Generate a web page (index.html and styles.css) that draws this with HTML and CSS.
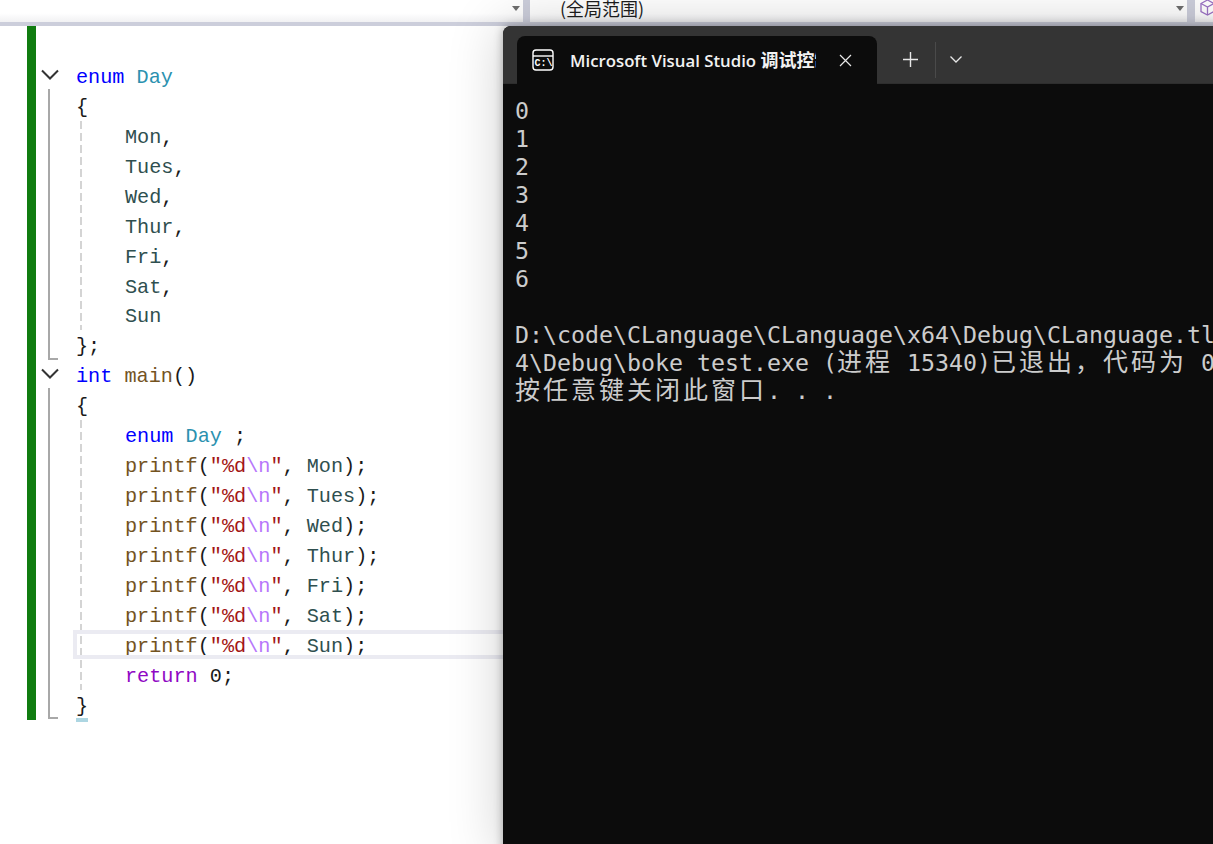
FILE: index.html
```html
<!DOCTYPE html>
<html lang="en">
<head>
    <meta charset="UTF-8">
    <title>boke test</title>
    <link rel="stylesheet" href="styles.css">
</head>
<body>
    <header class="topbar">
        <div class="combo combo_left"><span class="arrow"></span></div>
        <div class="combo combo_main">
            <span class="scope">(全局范围)</span>
            <span class="arrow"></span>
        </div>
        <div class="combo combo_right">
            <svg class="cube" width="16" height="18" viewBox="0 0 16 18" fill="none" stroke="#9b72c4" stroke-width="1.3">
                <path d="M1 4.5 L7.5 1 L14 4.5 V12.5 L7.5 16 L1 12.5 Z"/>
                <path d="M1 4.5 L7.5 8 L14 4.5 M7.5 8 V16"/>
            </svg>
        </div>
    </header>

    <div class="editor">
        <div class="changebar"></div>
        <div class="gutter">
            <div class="fold_head">
                <svg width="18" height="11" viewBox="0 0 18 11" fill="none" stroke="#333" stroke-width="2"><path d="M1 1.5 L9 9.5 L17 1.5"/></svg>
            </div>
            <div class="fold_body fold_enum"></div>
            <div class="fold_head">
                <svg width="18" height="11" viewBox="0 0 18 11" fill="none" stroke="#333" stroke-width="2"><path d="M1 1.5 L9 9.5 L17 1.5"/></svg>
            </div>
            <div class="fold_body fold_main"></div>
        </div>
        <div class="code">
            <div class="line"></div>
            <div class="line"><span class="kw">enum</span> <span class="type">Day</span></div>
            <div class="line">{</div>
            <div class="indent">
                <div class="line"><span class="const">Mon</span>,</div>
                <div class="line"><span class="const">Tues</span>,</div>
                <div class="line"><span class="const">Wed</span>,</div>
                <div class="line"><span class="const">Thur</span>,</div>
                <div class="line"><span class="const">Fri</span>,</div>
                <div class="line"><span class="const">Sat</span>,</div>
                <div class="line"><span class="const">Sun</span></div>
            </div>
            <div class="line">};</div>
            <div class="line"><span class="kw">int</span> <span class="fn">main</span>()</div>
            <div class="line">{</div>
            <div class="indent">
                <div class="line"><span class="kw">enum</span> <span class="type">Day</span> ;</div>
                <div class="line"><span class="fn">printf</span>(<span class="str">"%d</span><span class="esc">\n</span><span class="str">"</span>, <span class="const">Mon</span>);</div>
                <div class="line"><span class="fn">printf</span>(<span class="str">"%d</span><span class="esc">\n</span><span class="str">"</span>, <span class="const">Tues</span>);</div>
                <div class="line"><span class="fn">printf</span>(<span class="str">"%d</span><span class="esc">\n</span><span class="str">"</span>, <span class="const">Wed</span>);</div>
                <div class="line"><span class="fn">printf</span>(<span class="str">"%d</span><span class="esc">\n</span><span class="str">"</span>, <span class="const">Thur</span>);</div>
                <div class="line"><span class="fn">printf</span>(<span class="str">"%d</span><span class="esc">\n</span><span class="str">"</span>, <span class="const">Fri</span>);</div>
                <div class="line"><span class="fn">printf</span>(<span class="str">"%d</span><span class="esc">\n</span><span class="str">"</span>, <span class="const">Sat</span>);</div>
                <div class="line current"><span class="fn">printf</span>(<span class="str">"%d</span><span class="esc">\n</span><span class="str">"</span>, <span class="const">Sun</span>);</div>
                <div class="line"><span class="ret">return</span> 0;</div>
            </div>
            <div class="line">}</div>
            <div class="brace_mark"></div>
        </div>
    </div>

    <section class="console">
        <div class="tabbar">
            <div class="tab">
                <svg class="tab_icon" width="22" height="22" viewBox="0 0 22 22" fill="none" stroke="#fff" stroke-width="1.4">
                    <rect x="1" y="1" width="20" height="20" rx="3"/>
                    <path d="M1 7 H21"/>
                    <text x="2.5" y="17" class="tab_icon_text">C:\</text>
                </svg>
                <span class="tab_title">Microsoft Visual Studio <span class="tab_cjk">调试控制台</span></span>
                <svg class="tab_close" width="13" height="13" viewBox="0 0 13 13" stroke="#e8e8e8" stroke-width="1.2"><path d="M1 1 L12 12 M12 1 L1 12"/></svg>
            </div>
            <svg class="tab_plus" width="15" height="15" viewBox="0 0 15 15" stroke="#e8e8e8" stroke-width="1.4"><path d="M7.5 0 V15 M0 7.5 H15"/></svg>
            <div class="tab_sep"></div>
            <svg class="tab_more" width="12" height="7" viewBox="0 0 12 7" fill="none" stroke="#e8e8e8" stroke-width="1.3"><path d="M0.5 0.5 L6 6 L11.5 0.5"/></svg>
        </div>
        <div class="output">
            <div class="row">0</div>
            <div class="row">1</div>
            <div class="row">2</div>
            <div class="row">3</div>
            <div class="row">4</div>
            <div class="row">5</div>
            <div class="row">6</div>
            <div class="row"></div>
            <div class="row">D:\code\CLanguage\CLanguage\x64\Debug\CLanguage.tlog</div>
            <div class="row">4\Debug\boke test.exe (<span class="cjk">进程</span> 15340)<span class="cjk">已退出，代码为</span> 0</div>
            <div class="row"><span class="cjk">按任意键关闭此窗口</span>. . .</div>
        </div>
    </section>
</body>
</html>
```
FILE: styles.css
```css
* {
    box-sizing: border-box;
}

html, body {
    margin: 0;
    height: 100%;
    overflow: hidden;
    background-color: #fff;
}

/* top combo boxes */
.topbar {
    display: flex;
    height: 26px;
    border-bottom: 4px solid #cccedb;
    background-color: #cccedb;
}
.combo {
    position: relative;
    height: 22px;
    overflow: hidden;
    background: linear-gradient(#fff 60%, #f1f1f3);
}
.combo_left {
    width: 523px;
}
.combo_main {
    width: 657px;
    margin-left: 7px;
    padding-left: 30px;
}
.combo_right {
    flex: 1;
    margin-left: 8px;
    padding-left: 5px;
}
.arrow {
    position: absolute;
    top: 6px;
    right: 3px;
    border-left: 4px solid transparent;
    border-right: 4px solid transparent;
    border-top: 5px solid #6e6e6e;
}
.scope {
    font-family: "Noto Sans CJK SC", sans-serif;
    font-size: 18px;
    line-height: 17px;
    display: block;
    color: #1e1e1e;
}
.cube {
    display: block;
    margin-top: -1px;
}

/* editor */
.editor {
    display: flex;
    align-items: flex-start;
    margin-left: 27px;
}
.changebar {
    width: 9px;
    height: 694px;
    background-color: #107c10;
}
.gutter {
    width: 40px;
    padding-top: 35px;
    padding-left: 5px;
}
.fold_head {
    height: 28px;
    display: flex;
    align-items: center;
    padding-bottom: 2px;
}
.fold_body {
    width: 10px;
    margin-left: 7px;
    border-left: 2px solid #a8a8a8;
    border-bottom: 2px solid #a8a8a8;
}
.fold_enum {
    height: 271px;
}
.fold_main {
    height: 331px;
}

.code {
    font-family: "Liberation Mono", monospace;
    font-size: 20.2px;
    color: #1a1a1a;
    padding-top: 5px;
}
.line {
    position: relative;
    height: 29.95px;
    line-height: 33.95px;
    white-space: pre;
}
.indent {
    margin-left: 4px;
    padding-left: 45px;
    background-image: repeating-linear-gradient(#d4d4d4 0 8px, transparent 8px 12px);
    background-size: 2px 100%;
    background-repeat: no-repeat;
}
.current::before {
    content: "";
    position: absolute;
    top: 0;
    left: -52px;
    width: 460px;
    height: 29px;
    box-sizing: border-box;
    border: 4px solid #ebebf2;
    border-right: 0;
}
.brace_mark {
    width: 12px;
    height: 4px;
    margin-top: -2px;
    background-color: #add6e2;
}

.kw { color: #0000ff; }
.type { color: #2b91af; }
.const { color: #2f4f4f; }
.fn { color: #74531f; }
.str { color: #a31515; }
.esc { color: #b776fb; }
.ret { color: #8f08c4; }

/* terminal window */
.console {
    position: absolute;
    top: 26px;
    left: 503px;
    width: 730px;
    height: 830px;
    border-top-left-radius: 8px;
    background-color: #0c0c0c;
    box-shadow: 0 0 10px rgba(0, 0, 0, 0.3), 0 0 55px rgba(0, 0, 0, 0.2);
}
.tabbar {
    display: flex;
    align-items: center;
    height: 58px;
    padding-top: 10px;
    padding-left: 14px;
    border-top-left-radius: 8px;
    background-color: #343434;
    border-bottom: 1px solid #2e2e2e;
}
.tab {
    display: flex;
    align-items: center;
    align-self: flex-end;
    flex-shrink: 0;
    width: 360px;
    height: 48px;
    margin-bottom: -1px;
    padding-left: 15px;
    border-radius: 8px 8px 0 0;
    background-color: #0c0c0c;
}
.tab_icon_text {
    font-family: "Liberation Mono", monospace;
    font-size: 10px;
    font-weight: bold;
    fill: #fff;
    stroke: none;
}
.tab_title {
    width: 246px;
    margin-left: 16px;
    overflow: hidden;
    white-space: nowrap;
    font-family: "Open Sans", sans-serif;
    font-size: 16.8px;
    font-weight: 600;
    color: #f2f2f2;
}
.tab_cjk {
    font-family: "Noto Sans CJK SC", sans-serif;
    font-size: 18px;
    line-height: 0;
}
.tab_close {
    margin-left: 23px;
}
.tab_plus {
    margin-left: 26px;
}
.tab_sep {
    width: 1px;
    height: 36px;
    margin-left: 17px;
    background-color: #4a4a4a;
}
.tab_more {
    margin-left: 14px;
}
.output {
    height: 772px;
    padding: 13px 0 0 12px;
    overflow: hidden;
    font-family: "DejaVu Sans Mono", monospace;
    font-size: 23.25px;
    color: #cccccc;
}
.row {
    height: 28px;
    line-height: 28px;
    white-space: pre;
}
.cjk {
    font-family: "Noto Sans CJK SC", sans-serif;
    font-size: 25px;
    line-height: 0;
    letter-spacing: 3px;
}
```
